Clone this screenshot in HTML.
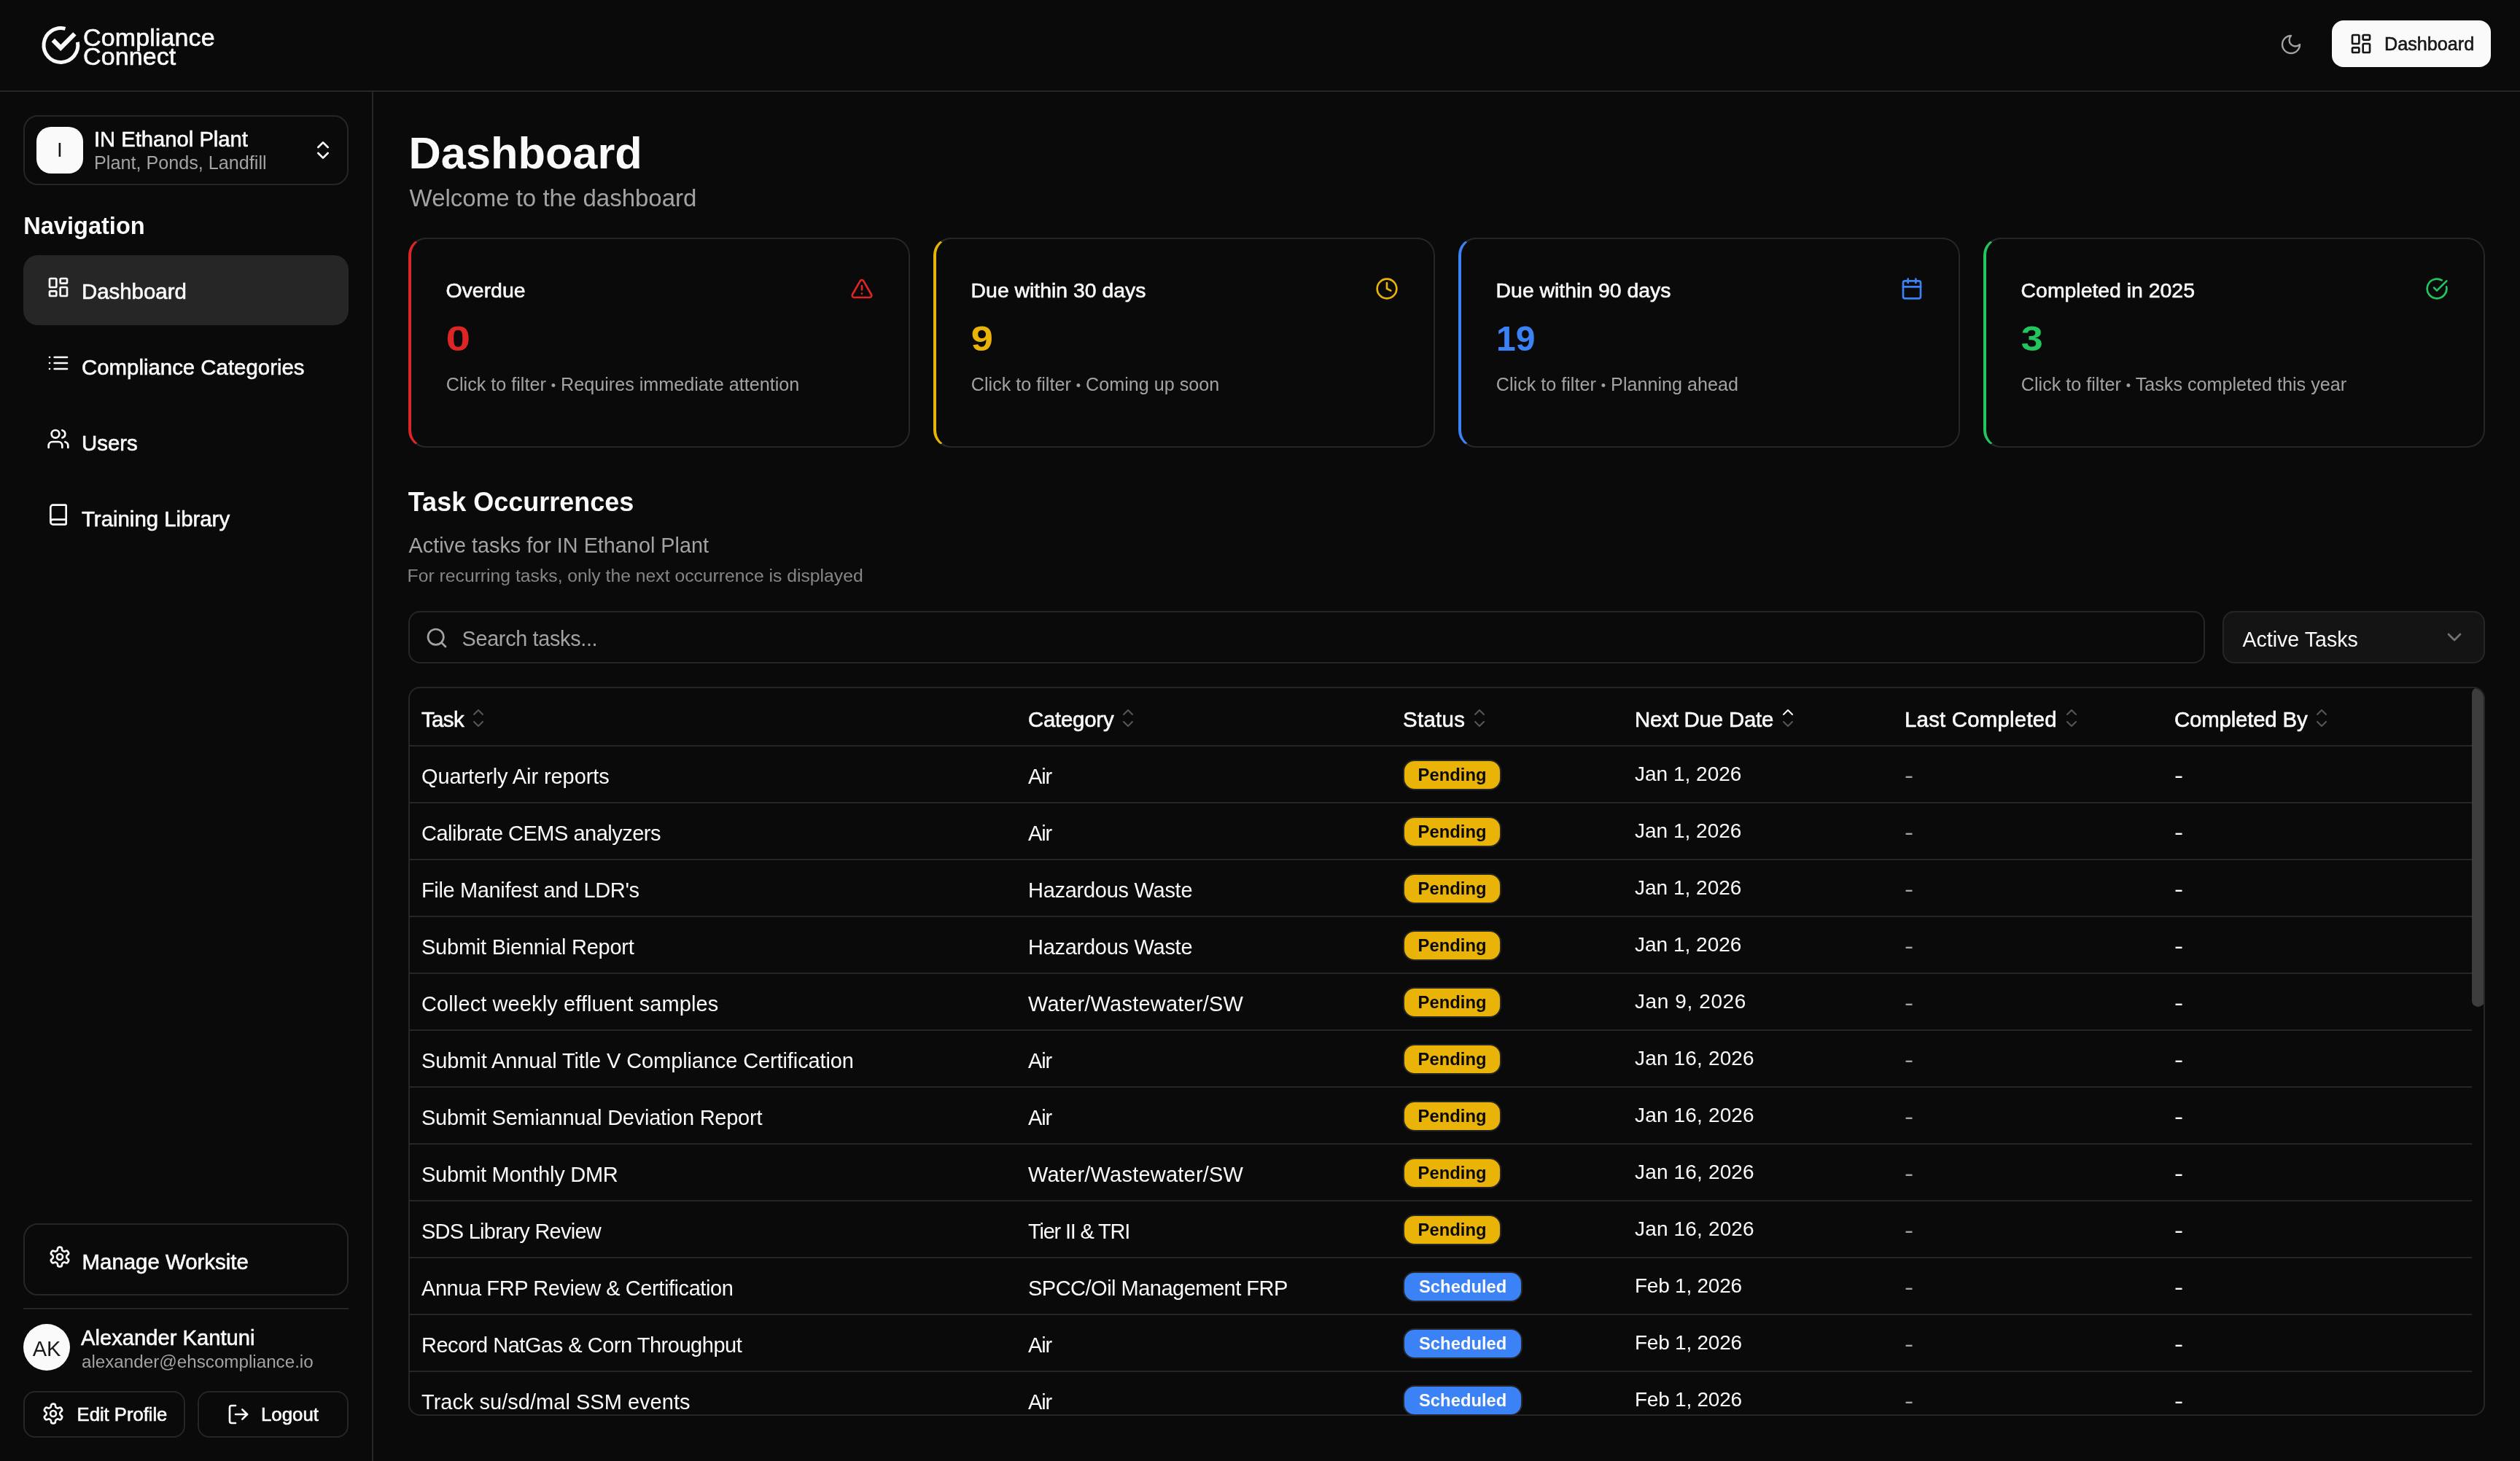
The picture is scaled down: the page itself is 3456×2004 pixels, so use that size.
<!DOCTYPE html>
<html>
<head>
<meta charset="utf-8">
<style>
*{box-sizing:border-box;margin:0;padding:0}
html,body{width:1728px;height:1002px;overflow:hidden;background:#0a0a0a;color:#fafafa;font-family:"Liberation Sans",sans-serif}
#root{position:absolute;left:0;top:0;width:1728px;height:1002px;will-change:transform}
.a{position:absolute}
svg{display:block;fill:none;stroke:currentColor;stroke-width:2;stroke-linecap:round;stroke-linejoin:round}
.t{position:absolute;white-space:nowrap}
/* header */
#hdr{position:absolute;left:0;top:0;width:1728px;height:63px;border-bottom:1px solid #262626}
/* sidebar */
#side{position:absolute;left:0;top:63px;width:256px;height:939px;border-right:1px solid #262626}
.box{position:absolute;border:1px solid #262626;border-radius:10px}
.nav{position:absolute;left:16px;width:223px;height:48px;border-radius:10px}
.nav.act{background:#262626}
.nav svg{position:absolute;left:16px;top:14px;width:16px;height:16px}
.nav .t{left:40px;top:0.8px;line-height:48px;font-size:14.7px}
.m,.nav .t,.card .lbl,.th .c{-webkit-text-stroke:0.3px currentColor}

.card{position:absolute;top:163px;width:344px;height:144px;border:1px solid #262626;border-left-width:2px;border-radius:12px}
.card .lbl{left:23.8px;top:25.05px;line-height:20px;font-size:14.2px}
.card .ic{position:absolute;left:301px;top:26px;width:16px;height:16px}
.card .num{left:24px;top:50.6px;line-height:36px;font-size:24px;font-weight:700}
.card .bu{font-size:0.72em;position:relative;top:-0.5px}
.card .dsc{left:23.9px;top:89.6px;line-height:20px;font-size:12.58px;color:#a3a3a3}
#tbl{position:absolute;left:280px;top:471px;width:1424px;height:500px;border:1px solid #262626;border-radius:8px;overflow:hidden}
#tbl .sb{z-index:2}
.th,.tr{position:absolute;left:0;width:1414px;border-bottom:1px solid #262626}
.th{top:0;height:40px}
.th .c{padding-top:3.5px}
.tr .c{padding-top:3px;line-height:20px}
.tr{height:39px}
.c{position:absolute;top:0;height:100%;display:flex;align-items:center;white-space:nowrap;font-size:14.5px}
.th .c{font-size:14.7px}
.c1{left:8px}.c2{left:424px}.c3{left:681px}.c4{left:840px}.c5{left:1025px}.c6{left:1210px}
.dash{color:#a3a3a3}
.d{font-style:normal;display:inline-block;transform:translateY(-0.7px) scaleX(1.25);transform-origin:0 50%}
.bdg{display:inline-block;height:21px;line-height:19px;border:1px solid #262626;border-radius:8px;font-size:11.9px;font-weight:700;padding:0 10px}
.pend{background:#eab308;color:#0a0a0a;padding:0 9.3px}
.bdg{position:relative;top:-1px}
.tr .c4{font-size:14px;top:-1.5px}
.sch{background:#3b82f6;color:#fafafa}
.so{display:block;width:12px;height:20px;margin-left:4px;color:#575757;flex:none;position:relative;top:-1px}
.sb{position:absolute;left:1414px;top:-0.5px;width:8.3px;height:219px;border-radius:4.15px;background:#3d3d3d}
@media (min-width:2600px){html{zoom:2}}
</style>
</head>
<body>
<div id="root">
<div id="hdr">
  <svg class="a" style="left:26px;top:16px;width:30px;height:30px;stroke-width:2.5;stroke-linecap:butt;stroke-linejoin:miter" viewBox="0 0 30 30">
    <path d="M18.75 3.7 A11.7 11.7 0 1 0 27.21 12.9"/>
    <path d="M10.4 11.5 L15.6 16.8 L25.2 7.2" stroke-width="3.1"/>
  </svg>
  <div class="t m" style="left:57px;top:16.8px;font-size:17px;line-height:17px;letter-spacing:0.06px">Compliance</div>
  <div class="t m" style="left:57px;top:29.8px;font-size:17px;line-height:17px;letter-spacing:0.05px">Connect</div>

  <svg class="a" style="left:1563px;top:22.6px;width:16px;height:16px;color:#a3a3a3;stroke-width:1.8" viewBox="0 0 24 24"><path d="M12 3a6 6 0 0 0 9 9 9 9 0 1 1-9-9Z"/></svg>
  <div class="a" style="left:1599px;top:14px;width:109px;height:32px;background:#fafafa;border-radius:8px;color:#171717">
    <svg class="a" style="left:12px;top:8px;width:16px;height:16px" viewBox="0 0 24 24"><rect width="7" height="9" x="3" y="3" rx="1"/><rect width="7" height="5" x="14" y="3" rx="1"/><rect width="7" height="9" x="14" y="12" rx="1"/><rect width="7" height="5" x="3" y="16" rx="1"/></svg>
    <div class="t m" style="left:36px;top:0;line-height:32px;font-size:12.6px">Dashboard</div>
  </div>
</div>

<div id="side"></div>
<!-- workspace selector -->
<div class="box" style="left:16px;top:79px;width:223px;height:48px"></div>
<div class="a" style="left:25px;top:87px;width:32px;height:32px;background:#fafafa;border-radius:10px;color:#171717;font-size:14px;line-height:32px;text-align:center">I</div>
<div class="t m" style="left:64.5px;top:85.6px;line-height:20px;font-size:14.6px">IN Ethanol Plant</div>
<div class="t" style="left:64.5px;top:101.6px;line-height:20px;font-size:12.6px;color:#a3a3a3">Plant, Ponds, Landfill</div>
<svg class="a" style="left:213.7px;top:95px;width:16px;height:16px" viewBox="0 0 24 24"><path d="m7 15 5 5 5-5"/><path d="m7 9 5-5 5 5"/></svg>

<div class="t" style="left:16.1px;top:144.8px;line-height:20px;font-size:16.3px;font-weight:700">Navigation</div>

<div class="nav act" style="top:175px">
  <svg style="top:14.2px" viewBox="0 0 24 24"><rect width="7" height="9" x="3" y="3" rx="1"/><rect width="7" height="5" x="14" y="3" rx="1"/><rect width="7" height="9" x="14" y="12" rx="1"/><rect width="7" height="5" x="3" y="16" rx="1"/></svg>
  <div class="t">Dashboard</div>
</div>
<div class="nav" style="top:227px">
  <svg style="top:14.1px" viewBox="0 0 24 24"><path d="M3 12h.01"/><path d="M3 18h.01"/><path d="M3 6h.01"/><path d="M8 12h13"/><path d="M8 18h13"/><path d="M8 6h13"/></svg>
  <div class="t">Compliance Categories</div>
</div>
<div class="nav" style="top:279px">
  <svg style="top:14.1px" viewBox="0 0 24 24"><path d="M16 21v-2a4 4 0 0 0-4-4H6a4 4 0 0 0-4 4v2"/><circle cx="9" cy="7" r="4"/><path d="M22 21v-2a4 4 0 0 0-3-3.87"/><path d="M16 3.13a4 4 0 0 1 0 7.75"/></svg>
  <div class="t">Users</div>
</div>
<div class="nav" style="top:331px">
  <svg style="top:14.1px" viewBox="0 0 24 24"><path d="M4 19.5v-15A2.5 2.5 0 0 1 6.5 2H19a1 1 0 0 1 1 1v18a1 1 0 0 1-1 1H6.5a1 1 0 0 1 0-5H20"/></svg>
  <div class="t">Training Library</div>
</div>

<!-- sidebar bottom -->
<div class="box" style="left:16px;top:839px;width:223px;height:49.5px"></div>
<svg class="a" style="left:33px;top:854.2px;width:16px;height:16px" viewBox="0 0 24 24"><path d="M12.22 2h-.44a2 2 0 0 0-2 2v.18a2 2 0 0 1-1 1.73l-.43.25a2 2 0 0 1-2 0l-.15-.08a2 2 0 0 0-2.73.73l-.22.38a2 2 0 0 0 .73 2.73l.15.1a2 2 0 0 1 1 1.72v.51a2 2 0 0 1-1 1.74l-.15.09a2 2 0 0 0-.73 2.73l.22.38a2 2 0 0 0 2.73.73l.15-.08a2 2 0 0 1 2 0l.43.25a2 2 0 0 1 1 1.73V20a2 2 0 0 0 2 2h.44a2 2 0 0 0 2-2v-.18a2 2 0 0 1 1-1.73l.43-.25a2 2 0 0 1 2 0l.15.08a2 2 0 0 0 2.73-.73l.22-.39a2 2 0 0 0-.73-2.73l-.15-.08a2 2 0 0 1-1-1.74v-.5a2 2 0 0 1 1-1.74l.15-.09a2 2 0 0 0 .73-2.73l-.22-.38a2 2 0 0 0-2.73-.73l-.15.08a2 2 0 0 1-2 0l-.43-.25a2 2 0 0 1-1-1.73V4a2 2 0 0 0-2-2z"/><circle cx="12" cy="12" r="3"/></svg>
<div class="t m" style="left:56.3px;top:855.4px;line-height:20px;font-size:14.7px">Manage Worksite</div>

<div class="a" style="left:16px;top:897px;width:223px;height:1px;background:#262626"></div>
<div class="a" style="left:16px;top:908px;width:32px;height:32px;border-radius:50%;background:#fafafa;color:#171717;font-size:14.5px;line-height:34.4px;text-align:center">AK</div>
<div class="t m" style="left:55.5px;top:907.7px;line-height:20px;font-size:14.6px">Alexander Kantuni</div>
<div class="t" style="left:56px;top:924px;line-height:20px;font-size:12.1px;color:#a3a3a3">alexander@ehscompliance.io</div>

<div class="box" style="left:16px;top:954px;width:111px;height:32px;border-radius:8px"></div>
<svg class="a" style="left:28.7px;top:961.5px;width:16px;height:16px" viewBox="0 0 24 24"><path d="M12.22 2h-.44a2 2 0 0 0-2 2v.18a2 2 0 0 1-1 1.730l-.43.25a2 2 0 0 1-2 0l-.15-.08a2 2 0 0 0-2.73.73l-.22.38a2 2 0 0 0 .73 2.73l.15.1a2 2 0 0 1 1 1.72v.51a2 2 0 0 1-1 1.74l-.15.09a2 2 0 0 0-.73 2.73l.22.38a2 2 0 0 0 2.73.73l.15-.08a2 2 0 0 1 2 0l.43.25a2 2 0 0 1 1 1.73V20a2 2 0 0 0 2 2h.44a2 2 0 0 0 2-2v-.18a2 2 0 0 1 1-1.73l.43-.25a2 2 0 0 1 2 0l.15.08a2 2 0 0 0 2.73-.73l.22-.39a2 2 0 0 0-.73-2.73l-.15-.08a2 2 0 0 1-1-1.74v-.5a2 2 0 0 1 1-1.74l.15-.09a2 2 0 0 0 .73-2.73l-.22-.38a2 2 0 0 0-2.73-.73l-.15.08a2 2 0 0 1-2 0l-.43-.25a2 2 0 0 1-1-1.73V4a2 2 0 0 0-2-2z"/><circle cx="12" cy="12" r="3"/></svg>
<div class="t m" style="left:52.8px;top:959.85px;line-height:20px;font-size:12.8px">Edit Profile</div>
<div class="box" style="left:135.5px;top:954px;width:103.5px;height:32px;border-radius:8px"></div>
<svg class="a" style="left:155.3px;top:962.1px;width:16px;height:16px" viewBox="0 0 24 24"><path d="M9 21H5a2 2 0 0 1-2-2V5a2 2 0 0 1 2-2h4"/><polyline points="16 17 21 12 16 7"/><line x1="21" x2="9" y1="12" y2="12"/></svg>
<div class="t m" style="left:179px;top:959.85px;line-height:20px;font-size:12.9px">Logout</div>

<!-- main -->
<div class="t" style="left:280.25px;top:86.95px;line-height:36px;font-size:30.66px;font-weight:700">Dashboard</div>
<div class="t" style="left:280.8px;top:123.85px;line-height:24px;font-size:16.5px;color:#a3a3a3">Welcome to the dashboard</div>

<div class="card" style="left:280px;border-left-color:#dc2626">
  <div class="t lbl">Overdue</div>
  <svg class="ic" style="color:#dc2626" viewBox="0 0 24 24"><path d="m21.73 18-8-14a2 2 0 0 0-3.48 0l-8 14A2 2 0 0 0 4 21h16a2 2 0 0 0 1.73-3"/><path d="M12 9v4"/><path d="M12 17h.01"/></svg>
  <div class="t num" style="color:#dc2626;transform:scaleX(1.26);transform-origin:1px 0">0</div>
  <div class="t dsc">Click to filter <span class="bu">•</span> Requires immediate attention</div>
</div>
<div class="card" style="left:640px;border-left-color:#eab308">
  <div class="t lbl">Due within 30 days</div>
  <svg class="ic" style="color:#eab308" viewBox="0 0 24 24"><circle cx="12" cy="12" r="10"/><polyline points="12 6 12 12 16 14"/></svg>
  <div class="t num" style="color:#eab308;transform:scaleX(1.13);transform-origin:1px 0">9</div>
  <div class="t dsc">Click to filter <span class="bu">•</span> Coming up soon</div>
</div>
<div class="card" style="left:1000px;border-left-color:#3b82f6">
  <div class="t lbl">Due within 90 days</div>
  <svg class="ic" style="color:#3b82f6" viewBox="0 0 24 24"><path d="M8 2v4"/><path d="M16 2v4"/><rect width="18" height="18" x="3" y="4" rx="2"/><path d="M3 10h18"/></svg>
  <div class="t num" style="color:#3b82f6">19</div>
  <div class="t dsc">Click to filter <span class="bu">•</span> Planning ahead</div>
</div>
<div class="card" style="left:1360px;border-left-color:#22c55e">
  <div class="t lbl">Completed in 2025</div>
  <svg class="ic" style="color:#22c55e" viewBox="0 0 24 24"><path d="M21.801 10A10 10 0 1 1 17 3.335"/><path d="m9 11 3 3L22 4"/></svg>
  <div class="t num" style="color:#22c55e;transform:scaleX(1.125);transform-origin:1px 0">3</div>
  <div class="t dsc">Click to filter <span class="bu">•</span> Tasks completed this year</div>
</div>

<div class="t" style="left:279.9px;top:332.65px;line-height:24px;font-size:18px;font-weight:700">Task Occurrences</div>
<div class="t" style="left:280.3px;top:364.2px;line-height:20px;font-size:14.4px;color:#a3a3a3">Active tasks for IN Ethanol Plant</div>
<div class="t" style="left:279.3px;top:384.9px;line-height:20px;font-size:12.36px;color:#868686">For recurring tasks, only the next occurrence is displayed</div>

<div class="box" style="left:280px;top:419px;width:1232px;height:36px;border-radius:8px"></div>
<svg class="a" style="left:291.7px;top:429.3px;width:16px;height:16px;color:#a3a3a3" viewBox="0 0 24 24"><circle cx="11" cy="11" r="8"/><path d="m21 21-4.3-4.3"/></svg>
<div class="t" style="left:316.8px;top:428.2px;line-height:20px;font-size:14.4px;color:#a3a3a3;letter-spacing:-0.16px">Search tasks...</div>

<div class="box" style="left:1524px;top:419px;width:180px;height:36px;border-radius:8px;background:#141414"></div>
<div class="t" style="left:1537.7px;top:428.3px;line-height:20px;font-size:14.3px">Active Tasks</div>
<svg class="a" style="left:1675px;top:429.2px;width:16px;height:16px;color:#737373" viewBox="0 0 24 24"><path d="m6 9 6 6 6-6"/></svg>

<div id="tbl">
  <div class="th"><div class="c c1" style="letter-spacing:-0.3px">Task<svg class="so" viewBox="0 0 24 40"><path d="m18 15-6-6-6 6"/><path d="m6 25 6 6 6-6"/></svg></div><div class="c c2" style="letter-spacing:-0.12px">Category<svg class="so" viewBox="0 0 24 40"><path d="m18 15-6-6-6 6"/><path d="m6 25 6 6 6-6"/></svg></div><div class="c c3" style="letter-spacing:0.16px">Status<svg class="so" viewBox="0 0 24 40"><path d="m18 15-6-6-6 6"/><path d="m6 25 6 6 6-6"/></svg></div><div class="c c4" style="letter-spacing:-0.1px">Next Due Date<svg class="so" viewBox="0 0 24 40"><path d="m18 15-6-6-6 6" style="stroke:#fafafa"/><path d="m6 25 6 6 6-6"/></svg></div><div class="c c5" style="letter-spacing:0.11px">Last Completed<svg class="so" viewBox="0 0 24 40"><path d="m18 15-6-6-6 6"/><path d="m6 25 6 6 6-6"/></svg></div><div class="c c6" style="letter-spacing:-0.09px">Completed By<svg class="so" viewBox="0 0 24 40"><path d="m18 15-6-6-6 6"/><path d="m6 25 6 6 6-6"/></svg></div></div>
<div class="tr" style="top:40px"><div class="c c1" style="letter-spacing:-0.044px">Quarterly Air reports</div><div class="c c2" style="letter-spacing:-0.546px">Air</div><div class="c c3"><span class="bdg pend">Pending</span></div><div class="c c4">Jan 1, 2026</div><div class="c c5 dash"><i class="d">-</i></div><div class="c c6"><i class="d">-</i></div></div>
<div class="tr" style="top:79px"><div class="c c1" style="letter-spacing:-0.252px">Calibrate CEMS analyzers</div><div class="c c2" style="letter-spacing:-0.546px">Air</div><div class="c c3"><span class="bdg pend">Pending</span></div><div class="c c4">Jan 1, 2026</div><div class="c c5 dash"><i class="d">-</i></div><div class="c c6"><i class="d">-</i></div></div>
<div class="tr" style="top:118px"><div class="c c1" style="letter-spacing:-0.178px">File Manifest and LDR's</div><div class="c c2" style="letter-spacing:-0.139px">Hazardous Waste</div><div class="c c3"><span class="bdg pend">Pending</span></div><div class="c c4">Jan 1, 2026</div><div class="c c5 dash"><i class="d">-</i></div><div class="c c6"><i class="d">-</i></div></div>
<div class="tr" style="top:157px"><div class="c c1" style="letter-spacing:-0.113px">Submit Biennial Report</div><div class="c c2" style="letter-spacing:-0.139px">Hazardous Waste</div><div class="c c3"><span class="bdg pend">Pending</span></div><div class="c c4">Jan 1, 2026</div><div class="c c5 dash"><i class="d">-</i></div><div class="c c6"><i class="d">-</i></div></div>
<div class="tr" style="top:196px"><div class="c c1" style="letter-spacing:0.054px">Collect weekly effluent samples</div><div class="c c2" style="letter-spacing:0.107px">Water/Wastewater/SW</div><div class="c c3"><span class="bdg pend">Pending</span></div><div class="c c4" style="letter-spacing:0.3px">Jan 9, 2026</div><div class="c c5 dash"><i class="d">-</i></div><div class="c c6"><i class="d">-</i></div></div>
<div class="tr" style="top:235px"><div class="c c1" style="letter-spacing:-0.056px">Submit Annual Title V Compliance Certification</div><div class="c c2" style="letter-spacing:-0.546px">Air</div><div class="c c3"><span class="bdg pend">Pending</span></div><div class="c c4" style="letter-spacing:0.08px">Jan 16, 2026</div><div class="c c5 dash"><i class="d">-</i></div><div class="c c6"><i class="d">-</i></div></div>
<div class="tr" style="top:274px"><div class="c c1" style="letter-spacing:-0.122px">Submit Semiannual Deviation Report</div><div class="c c2" style="letter-spacing:-0.546px">Air</div><div class="c c3"><span class="bdg pend">Pending</span></div><div class="c c4" style="letter-spacing:0.08px">Jan 16, 2026</div><div class="c c5 dash"><i class="d">-</i></div><div class="c c6"><i class="d">-</i></div></div>
<div class="tr" style="top:313px"><div class="c c1" style="letter-spacing:-0.124px">Submit Monthly DMR</div><div class="c c2" style="letter-spacing:0.107px">Water/Wastewater/SW</div><div class="c c3"><span class="bdg pend">Pending</span></div><div class="c c4" style="letter-spacing:0.08px">Jan 16, 2026</div><div class="c c5 dash"><i class="d">-</i></div><div class="c c6"><i class="d">-</i></div></div>
<div class="tr" style="top:352px"><div class="c c1" style="letter-spacing:-0.374px">SDS Library Review</div><div class="c c2" style="letter-spacing:-0.598px">Tier II &amp; TRI</div><div class="c c3"><span class="bdg pend">Pending</span></div><div class="c c4" style="letter-spacing:0.08px">Jan 16, 2026</div><div class="c c5 dash"><i class="d">-</i></div><div class="c c6"><i class="d">-</i></div></div>
<div class="tr" style="top:391px"><div class="c c1" style="letter-spacing:-0.214px">Annua FRP Review &amp; Certification</div><div class="c c2" style="letter-spacing:-0.253px">SPCC/Oil Management FRP</div><div class="c c3"><span class="bdg sch">Scheduled</span></div><div class="c c4" style="letter-spacing:-0.12px">Feb 1, 2026</div><div class="c c5 dash"><i class="d">-</i></div><div class="c c6"><i class="d">-</i></div></div>
<div class="tr" style="top:430px"><div class="c c1" style="letter-spacing:-0.238px">Record NatGas &amp; Corn Throughput</div><div class="c c2" style="letter-spacing:-0.546px">Air</div><div class="c c3"><span class="bdg sch">Scheduled</span></div><div class="c c4" style="letter-spacing:-0.12px">Feb 1, 2026</div><div class="c c5 dash"><i class="d">-</i></div><div class="c c6"><i class="d">-</i></div></div>
<div class="tr" style="top:469px"><div class="c c1" style="letter-spacing:0.01px">Track su/sd/mal SSM events</div><div class="c c2" style="letter-spacing:-0.546px">Air</div><div class="c c3"><span class="bdg sch">Scheduled</span></div><div class="c c4" style="letter-spacing:-0.12px">Feb 1, 2026</div><div class="c c5 dash"><i class="d">-</i></div><div class="c c6"><i class="d">-</i></div></div>
  <div class="sb"></div>
</div>

</div>
</body>
</html>
